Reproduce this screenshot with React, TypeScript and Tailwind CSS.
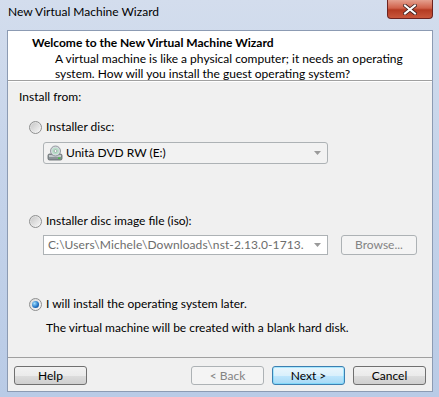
import React from "react";

function Radio({ checked }: { checked?: boolean }) {
  return (
    <span className="relative flex h-[13px] w-[13px] shrink-0 items-center justify-center rounded-full border border-[#8e8f8f] bg-[linear-gradient(135deg,#d8d8d8,#f8f8f8)]">
      {checked ? (
        <span className="h-[7px] w-[7px] rounded-full bg-[radial-gradient(circle_at_35%_35%,#9fe0ff,#1e6fc2_60%,#0c3e7a)]" />
      ) : (
        <span className="h-[9px] w-[9px] rounded-full bg-[linear-gradient(135deg,#c8c8c8,#f4f4f4)]" />
      )}
    </span>
  );
}

function Arrow() {
  return (
    <svg width="7" height="4" viewBox="0 0 7 4" className="shrink-0">
      <path d="M0 0h7L3.5 4z" fill="#9a9a9a" />
    </svg>
  );
}

function DvdIcon() {
  return (
    <svg width="16" height="16" viewBox="0 0 16 16" className="shrink-0">
      <rect x="1" y="9" width="14" height="6" rx="1.5" fill="#8c9498" stroke="#5e6468" strokeWidth="0.8" />
      <rect x="2" y="10" width="12" height="2" fill="#c4cacd" />
      <rect x="11" y="12.5" width="2.5" height="1.3" fill="#3fbf3f" />
      <circle cx="8.5" cy="6" r="5" fill="#d6dadf" stroke="#7d868c" strokeWidth="0.8" />
      <circle cx="8.5" cy="6" r="3.3" fill="#b8e0c8" />
      <circle cx="8.5" cy="6" r="1.4" fill="#ffffff" stroke="#7d868c" strokeWidth="0.6" />
    </svg>
  );
}

export default function App() {
  const font = "font-['Segoe_UI','Lato','Noto_Sans',sans-serif]";
  return (
    <div
      className={`relative flex h-[397px] w-[439px] flex-col overflow-hidden bg-[linear-gradient(180deg,#d3dded_0%,#c6d4ea_40%,#b9cbe6_100%)] text-[12px] leading-[16px] text-black ${font}`}
    >
      {/* title bar */}
      <div className="flex h-[30px] shrink-0 items-start pl-[8px] pt-[4px] text-[12px] text-black">
        New Virtual Machine Wizard
      </div>

      {/* close button */}
      <div className="absolute right-[6px] top-0 flex h-[19px] w-[46px] items-center justify-center rounded-b-[4px] border border-t-0 border-[#6c2320] bg-[linear-gradient(180deg,#e5a08f_0%,#d0614a_45%,#b43a22_55%,#c8573c_100%)]">
        <svg width="14" height="11" viewBox="0 0 14 11">
          <path
            d="M2 1.5L12 9.5M12 1.5L2 9.5"
            stroke="#3d2020"
            strokeWidth="3.6"
            strokeLinecap="square"
          />
          <path
            d="M2 1.5L12 9.5M12 1.5L2 9.5"
            stroke="#ffffff"
            strokeWidth="2"
            strokeLinecap="square"
          />
        </svg>
      </div>

      {/* client */}
      <div className="ml-[7px] mr-[6px] flex h-[362px] shrink-0 flex-col border border-[#8c9bb3] bg-[#f0f0f0]">
        {/* header */}
        <div className="flex h-[50px] shrink-0 flex-col border-b border-[#a0a0a0] bg-white pl-[24px] pt-[4px]">
          <div className="font-bold leading-[16px]">Welcome to the New Virtual Machine Wizard</div>
          <div className="pl-[23px] leading-[15px]">
            <div>A virtual machine is like a physical computer; it needs an operating</div>
            <div>system. How will you install the guest operating system?</div>
          </div>
        </div>

        {/* body */}
        <div className="flex flex-1 flex-col border-t border-white pl-[11px]">
          <div className="mt-[7px]">Install from:</div>

          <label className="mt-[14px] flex items-center gap-[4px] pl-[10px]">
            <Radio />
            <span>Installer disc:</span>
          </label>

          <div className="ml-[24px] mt-[7px] flex h-[22px] w-[285px] items-center rounded-[3px] border border-[#adb2b5] bg-[#f2f2f2] pl-[3px] pr-[6px]">
            <DvdIcon />
            <span className="ml-[3px] flex-1">Unità DVD RW (E:)</span>
            <Arrow />
          </div>

          <label className="mt-[49px] flex items-center gap-[4px] pl-[10px]">
            <Radio />
            <span>Installer disc image file (iso):</span>
          </label>

          <div className="mt-[6px] flex items-center">
            <div className="ml-[24px] flex h-[20px] w-[285px] items-center border border-[#adb2b5] bg-white pl-[4px] pr-[6px]">
              <span className="min-w-0 flex-1 overflow-hidden whitespace-nowrap tracking-[0.1px] text-[#6d6d6d]">
                C:\Users\Michele\Downloads\nst-2.13.0-1713.i686.iso
              </span>
              <span className="ml-[10px]">
                <Arrow />
              </span>
            </div>
            <div className="ml-[13px] flex h-[20px] w-[76px] items-center justify-center rounded-[3px] border border-[#adb2b5] bg-[#f4f4f4] text-[#838383]">
              Browse...
            </div>
          </div>

          <label className="mt-[41px] flex items-center gap-[4px] pl-[10px]">
            <Radio checked />
            <span>I will install the operating system later.</span>
          </label>

          <div className="mt-[8px] pl-[27px]">
            The virtual machine will be created with a blank hard disk.
          </div>
        </div>

        {/* footer */}
        <div className="flex h-[34px] shrink-0 items-start border-t border-[#a0a0a0] px-[6px] pt-[8px]">
          <div className="flex h-[19px] w-[73px] items-center justify-center rounded-[3px] border border-[#707070] bg-[linear-gradient(180deg,#f2f2f2_0%,#ebebeb_50%,#dddddd_50%,#cfcfcf_100%)]">
            Help
          </div>
          <div className="flex-1" />
          <div className="flex h-[19px] w-[73px] items-center justify-center rounded-[3px] border border-[#adb2b5] bg-[#f4f4f4] text-[#838383]">
            &lt; Back
          </div>
          <div className="ml-[8px] flex h-[19px] w-[73px] items-center justify-center rounded-[3px] border border-[#3c7fb1] bg-[linear-gradient(180deg,#eaf6fd_0%,#d9f0fc_50%,#bee6fd_50%,#a7d9f5_100%)] shadow-[inset_0_0_0_1px_#48d4ff66]">
            Next &gt;
          </div>
          <div className="ml-[8px] flex h-[19px] w-[73px] items-center justify-center rounded-[3px] border border-[#707070] bg-[linear-gradient(180deg,#f2f2f2_0%,#ebebeb_50%,#dddddd_50%,#cfcfcf_100%)]">
            Cancel
          </div>
        </div>
      </div>
    </div>
  );
}
